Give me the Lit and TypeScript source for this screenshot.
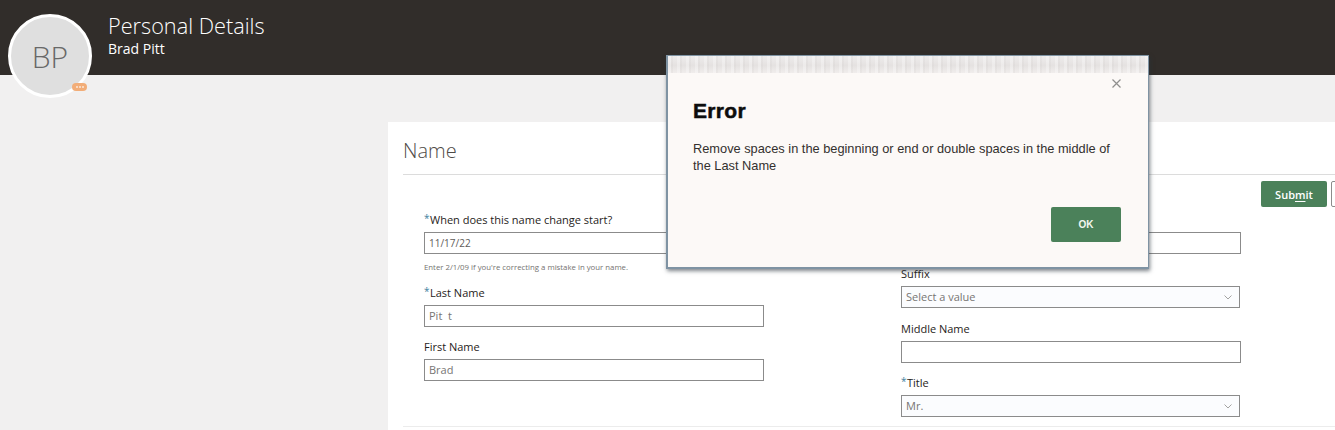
import { LitElement, html, css } from 'lit';
import { customElement } from 'lit/decorators.js';

const chevron = html`<svg class="chev" width="8" height="5" viewBox="0 0 8 5"><path d="M.5.5L4 4 7.500.5" fill="none" stroke="#a3a3a1" stroke-width="1"/></svg>`;

@customElement('app-root')
export class AppRoot extends LitElement {
  static styles = css`
    :host {
      display: block;
      position: relative;
      width: 1335px;
      height: 430px;
      overflow: hidden;
      background: #f1f0f0;
      font-family: 'Open Sans', 'Noto Sans', sans-serif;
      color: #1f1c1a;
    }
    .top {
      height: 75px;
      background: #312d2a;
      box-sizing: border-box;
      padding: 12px 0 0 108px;
      color: #fff;
    }
    .top h1 {
      margin: 0;
      font-size: 21.700px;
      line-height: 27px;
      font-weight: 300;
    }
    .top div {
      font-size: 14px;
      line-height: 18px;
      margin-top: 1px;
    }
    .avatar {
      position: absolute;
      left: 8px;
      top: 14px;
      width: 78px;
      height: 77px;
      padding-top: 1px;
      border: 3px solid #fff;
      border-radius: 50%;
      background: #dfdfdf;
      color: #686868;
      font-size: 30px;
      font-weight: 300;
      display: flex;
      align-items: center;
      justify-content: center;
    }
    .badge {
      position: absolute;
      left: 72px;
      top: 83px;
      width: 15px;
      height: 8px;
      border-radius: 4px;
      background: #f2ad78;
      display: flex;
      align-items: center;
      justify-content: center;
      gap: 1px;
    }
    .badge i {
      width: 2px;
      height: 2px;
      border-radius: 50%;
      background: #fbe9da;
    }
    .card {
      margin: 47px 0 0 388px;
      height: 308px;
      background: #fff;
      box-sizing: border-box;
      padding: 15px 0 0 15px;
    }
    .head {
      height: 37px;
      border-bottom: 1px solid #dcdcdc;
    }
    .head h2 {
      margin: 0;
      font-size: 20px;
      line-height: 28px;
      font-weight: 300;
      color: #4f4b47;
    }
    .actions {
      display: flex;
      gap: 4px;
      margin-top: 6px;
      margin-left: 858px;
      height: 26px;
    }
    .submit {
      flex: none;
      width: 66px;
      height: 26px;
      border-radius: 2px;
      background: #4b815a;
      color: #fff;
      font-size: 11px;
      font-weight: 600;
      display: flex;
      align-items: center;
      justify-content: center;
    }
    .submit u {
      text-underline-offset: 2px;
    }
    .next {
      flex: none;
      width: 20px;
      height: 26px;
      box-sizing: border-box;
      border: 1px solid #8c8c8c;
      border-radius: 2px;
      background: #fff;
    }
    .form {
      display: grid;
      grid-template-columns: 340px 340px;
      column-gap: 137px;
      margin: 5px 0 0 21px;
    }
    .col {
      display: flex;
      flex-direction: column;
    }
    .field label {
      display: block;
      font-size: 11px;
      line-height: 15px;
      margin-bottom: 5px;
      color: #1f1c1a;
    }
    .field + .field {
      margin-top: 12px;
    }
    .field.wide-gap {
      margin-top: 13px;
    }
    .req {
      display: inline-block;
      width: 6px;
      color: #3e7fa0;
      font-size: 10px;
      line-height: 10px;
      vertical-align: 2px;
    }
    .input {
      box-sizing: border-box;
      height: 22px;
      border: 1px solid #8b8b8b;
      background: #fff;
      padding: 0 4px;
      font-size: 11px;
      line-height: 20px;
      color: #777573;
      white-space: pre;
      display: flex;
      align-items: center;
      justify-content: space-between;
    }
    .input.date {
      font-size: 10px;
      color: #5e5c5a;
    }
    .input.select {
      background: #fbfcfe;
      margin-right: 1px;
    }
    .chev {
      margin-right: 3px;
    }
    .hint {
      font-size: 7.800px;
      line-height: 10px;
      margin-top: 8px;
      color: #747270;
    }
    .rule {
      height: 1px;
      margin-top: 9px;
      background: #ececec;
    }
    .dialog {
      position: absolute;
      left: 666px;
      top: 55px;
      width: 483px;
      height: 214px;
      box-sizing: border-box;
      background: #fcf9f7;
      border: 1px solid #7f93a3;
      border-left-width: 2px;
      border-bottom-width: 2px;
      box-shadow: 1px 2px 4px rgba(40, 50, 60, 0.6);
      padding: 0 27px 0 25px;
      display: flex;
      flex-direction: column;
    }
    .strip {
      height: 17px;
      margin: 0 -27px 0 -25px;
      background-color: #ebe8e7;
      background-image: repeating-linear-gradient(
          90deg,
          rgba(255, 255, 255, 0.3) 0 3px,
          rgba(190, 186, 184, 0.12) 3px 5px,
          transparent 5px 9px
        ),
        linear-gradient(#eeecec, #e5e2e1 55%, #f0edec);
    }
    .close {
      flex: none;
      align-self: flex-end;
      margin-top: 6px;
      width: 9px;
      height: 9px;
      display: block;
    }
    .dialog h3 {
      margin: 10px 0 0;
      font-family: 'Liberation Sans', Arial, sans-serif;
      font-size: 21px;
      line-height: 26px;
      font-weight: 700;
      color: #0d0d0d;
      -webkit-text-stroke: 0.5px #0d0d0d;
      letter-spacing: 0.3px;
    }
    .dialog p {
      margin: 16px 0 0;
      font-family: 'Liberation Sans', Arial, sans-serif;
      font-size: 12.800px;
      line-height: 17px;
      color: #33302e;
    }
    .ok {
      align-self: flex-end;
      margin-top: 33px;
      width: 70px;
      height: 35px;
      border-radius: 2px;
      background: #4b815a;
      color: #f2f7ef;
      font-family: 'Liberation Sans', Arial, sans-serif;
      font-size: 10px;
      font-weight: 700;
      display: flex;
      align-items: center;
      justify-content: center;
    }
  `;

  field(label: string, value: string, opts: { req?: boolean; select?: boolean; date?: boolean; gap?: boolean } = {}) {
    return html`<div class="field ${opts.gap ? 'wide-gap' : ''}">
      <label>${opts.req ? html`<span class="req">*</span>` : ''}${label}</label>
      <div class="input ${opts.select ? 'select' : ''} ${opts.date ? 'date' : ''}"><span>${value}</span>${opts.select ? chevron : ''}</div>
    </div>`;
  }

  render() {
    return html`
      <div class="top">
        <h1>Personal Details</h1>
        <div>Brad Pitt</div>
      </div>
      <div class="avatar">BP</div>
      <div class="badge"><i></i><i></i><i></i></div>
      <div class="card">
        <div class="head"><h2>Name</h2></div>
        <div class="actions">
          <div class="submit"><span>Sub<u>m</u>it</span></div>
          <div class="next"></div>
        </div>
        <div class="form">
          <div class="col">
            ${this.field('When does this name change start?', '11/17/22', { req: true, date: true })}
            <div class="hint">Enter 2/1/09 if you're correcting a mistake in your name.</div>
            ${this.field('Last Name', 'Pit  t', { req: true, gap: true })}
            ${this.field('First Name', 'Brad')}
          </div>
          <div class="col">
            ${this.field('Prefix', '')}
            ${this.field('Suffix', 'Select a value', { select: true })}
            ${this.field('Middle Name', '', { gap: true })}
            ${this.field('Title', 'Mr.', { req: true, select: true })}
          </div>
        </div>
        <div class="rule"></div>
      </div>
      <div class="dialog">
        <div class="strip"></div>
        <svg class="close" viewBox="0 0 9 9"><path d="M.5.5l8 8M8.5.5l-8 8" stroke="#8f8f8d" stroke-width="1.2" fill="none"/></svg>
        <h3>Error</h3>
        <p>Remove spaces in the beginning or end or double spaces in the middle of the Last Name</p>
        <div class="ok">OK</div>
      </div>
    `;
  }
}
